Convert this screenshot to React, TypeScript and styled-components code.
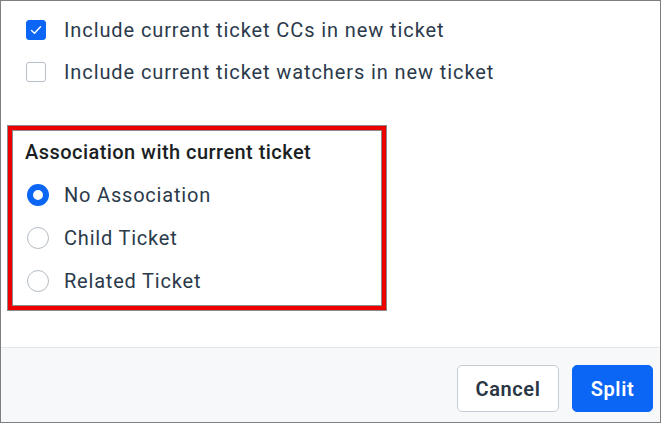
import React from "react";
import styled, { createGlobalStyle } from "styled-components";

const Global = createGlobalStyle`
  html, body { margin: 0; padding: 0; background: #ffffff; }
  body { font-family: Roboto, "Noto Sans", "Liberation Sans", sans-serif; }
  * { box-sizing: border-box; }
`;

const BLUE = "#0b66f5";
const TEXT = "#2b3a4b";

const Frame = styled.div`
  width: 661px;
  height: 423px;
  border: 1px solid #7f7f7f;
  display: flex;
  flex-direction: column;
  background: #ffffff;
`;

const Body = styled.div`
  flex: 1;
  padding: 19px 0 0 7px;
  display: flex;
  flex-direction: column;
`;

const OptionList = styled.div<{ $indent: number; $gap: number }>`
  display: flex;
  flex-direction: column;
  gap: ${(p) => p.$gap}px;
  padding-left: ${(p) => p.$indent}px;
`;

const Row = styled.label`
  display: flex;
  align-items: center;
  height: 22px;
  gap: 15px;
  font-size: 20px;
  line-height: 24px;
  color: ${TEXT};
  letter-spacing: 0.8px;
`;

const CheckRow = styled(Row)`
  height: 20px;
  gap: 18px;
  letter-spacing: 0.9px;
`;

const Box = styled.span<{ $checked: boolean }>`
  width: 20px;
  height: 20px;
  border-radius: 3px;
  flex: none;
  display: flex;
  align-items: center;
  justify-content: center;
  background: ${(p) => (p.$checked ? BLUE : "#ffffff")};
  border: 1px solid ${(p) => (p.$checked ? BLUE : "#b6bec6")};
`;

const Section = styled.div`
  margin-top: 44px;
  width: 378px;
  border: 4px solid #ee0000;
  box-shadow: 0 0 0 1px #8a8a8a, inset 0 0 0 1px #8a8a8a;
  padding: 10px 0 14px 13px;
  display: flex;
  flex-direction: column;
`;

const Heading = styled.div`
  font-size: 20px;
  line-height: 24px;
  font-weight: 500;
  letter-spacing: 0.45px;
  color: #1b1f24;
  margin-bottom: 20px;
`;

const Radio = styled.span<{ $checked: boolean }>`
  width: 22px;
  height: 22px;
  border-radius: 50%;
  flex: none;
  margin-left: 2px;
  background: #ffffff;
  border: ${(p) => (p.$checked ? `6.5px solid ${BLUE}` : "1px solid #b4bcc4")};
`;

const Footer = styled.div`
  height: 75px;
  border-top: 1px solid #e3e7eb;
  background: #f6f8f9;
  display: flex;
  justify-content: flex-end;
  align-items: flex-start;
  padding: 17px 7px 0 0;
  gap: 13px;
`;

const Button = styled.button<{ $primary?: boolean }>`
  height: 47px;
  padding: 0;
  width: ${(p) => (p.$primary ? "81px" : "102px")};
  border-radius: 5px;
  font-family: Roboto, "Noto Sans", sans-serif;
  font-size: 20px;
  font-weight: 600;
  letter-spacing: 0.6px;
  cursor: pointer;
  background: ${(p) => (p.$primary ? BLUE : "#ffffff")};
  color: ${(p) => (p.$primary ? "#ffffff" : "#2a3644")};
  border: 1px solid ${(p) => (p.$primary ? BLUE : "#c5ccd3")};
`;

const Check = () => (
  <svg width="14" height="14" viewBox="0 0 14 14" fill="none">
    <path d="M2.5 7.5 L5.5 10.3 L11.5 3.8" stroke="#ffffff" strokeWidth="1.4" strokeLinecap="round" strokeLinejoin="round" />
  </svg>
);

export default function App() {
  const checks = [
    { label: "Include current ticket CCs in new ticket", checked: true },
    { label: "Include current ticket watchers in new ticket", checked: false },
  ];
  const radios = ["No Association", "Child Ticket", "Related Ticket"];
  return (
    <>
      <Global />
      <Frame>
        <Body>
          <OptionList $indent={18} $gap={22}>
            {checks.map((c) => (
              <CheckRow key={c.label}>
                <Box $checked={c.checked}>{c.checked && <Check />}</Box>
                <span>{c.label}</span>
              </CheckRow>
            ))}
          </OptionList>
          <Section>
            <Heading>Association with current ticket</Heading>
            <OptionList $indent={0} $gap={21}>
              {radios.map((r, i) => (
                <Row key={r}>
                  <Radio $checked={i === 0} />
                  <span>{r}</span>
                </Row>
              ))}
            </OptionList>
          </Section>
        </Body>
        <Footer>
          <Button>Cancel</Button>
          <Button $primary>Split</Button>
        </Footer>
      </Frame>
    </>
  );
}
